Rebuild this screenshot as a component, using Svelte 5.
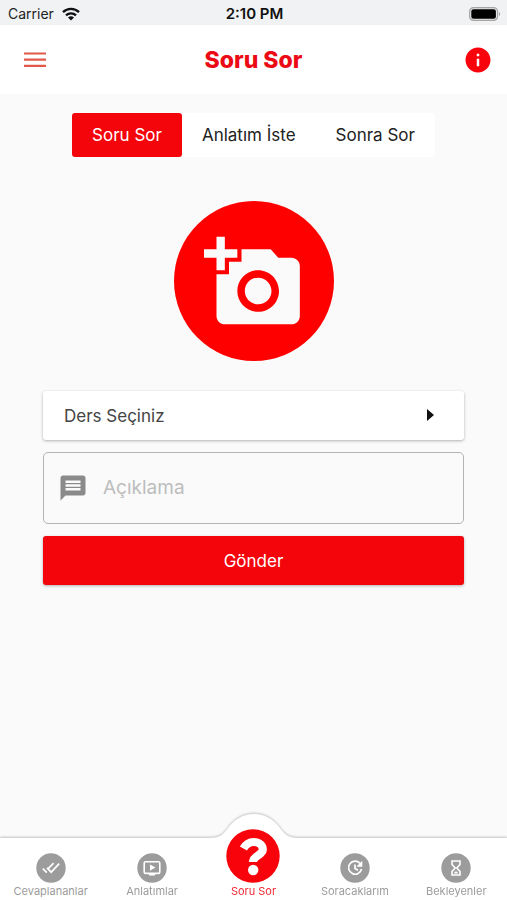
<script>
  let active = "Soru Sor";
  let lesson = "";
  let description = "";

  const tabs = ["Soru Sor", "Anlatım İste", "Sonra Sor"];
  const lessons = ["Matematik", "Fizik", "Kimya", "Biyoloji"];
</script>

<div class="page">
  <div class="status">
    <span class="carrier">
      Carrier
      <svg class="wifi" viewBox="0 0 18 14" aria-hidden="true">
        <g fill="none" stroke="#111" stroke-width="2.3">
          <path d="M1 5.1a11.4 11.4 0 0 1 16 0" />
          <path d="M4 8.4a7.1 7.1 0 0 1 10 0" />
        </g>
        <path d="M6 10.6a4.3 4.3 0 0 1 6 0L9 13.6z" fill="#111" />
      </svg>
    </span>
    <span class="time">2:10 PM</span>
    <svg class="battery" viewBox="0 0 32 14" aria-hidden="true">
      <rect x="0.6" y="0.6" width="28" height="12.8" rx="4" fill="#e6e6e6" stroke="#a5a5a5" stroke-width="1.2" />
      <rect x="2.3" y="2.3" width="24.6" height="9.4" rx="2.2" fill="#000" />
      <path d="M30 5c1.6.6 1.6 3.4 0 4z" fill="#a5a5a5" />
    </svg>
  </div>

  <header>
    <button class="icon-button" aria-label="Menü">
      <svg width="24" height="24" viewBox="0 0 24 24">
        <path d="M1 5.5h22M1 11.7h22M1 17.9h22" stroke="#e2594a" stroke-width="2.2" />
      </svg>
    </button>
    <h1>Soru Sor</h1>
    <button class="icon-button info" aria-label="Bilgi">
      <svg width="30" height="30" viewBox="0 0 24 24" fill="#f8030b">
        <path d="M12 2C6.48 2 2 6.48 2 12s4.48 10 10 10 10-4.48 10-10S17.52 2 12 2zm1 15h-2v-6h2v6zm0-8h-2V7h2v2z" />
      </svg>
    </button>
  </header>

  <main>
    <div class="tabs">
      {#each tabs as tab}
        <button class="tab" class:active={active == tab} on:click={() => (active = tab)}>{tab}</button>
      {/each}
    </div>

    <button class="photo" aria-label="Fotoğraf ekle">
      <svg width="100" height="100" viewBox="0 -0.4 24 24" fill="#fafafa">
        <path d="M3 4V1h2v3h3v2H5v3H3V6H0V4h3zm3 6V7h3V4h7l1.83 2H21c1.1 0 2 .9 2 2v12c0 1.1-.9 2-2 2H5c-1.1 0-2-.9-2-2V10h3zm7 9c2.76 0 5-2.24 5-5s-2.24-5-5-5-5 2.24-5 5 2.24 5 5 5zm-3.2-5c0 1.77 1.43 3.2 3.2 3.2s3.2-1.43 3.2-3.2-1.43-3.2-3.2-3.2-3.2 1.43-3.2 3.2z" />
      </svg>
    </button>

    <form on:submit|preventDefault>
      <div class="select">
        <select bind:value={lesson} aria-label="Ders">
          <option value="">Ders Seçiniz</option>
          {#each lessons as item}
            <option value={item}>{item}</option>
          {/each}
        </select>
        <svg class="arrow" viewBox="0 0 7 12" aria-hidden="true"><path d="M0 0l7 6-7 6z" fill="#111" /></svg>
      </div>

      <label class="description">
        <svg width="30" height="30" viewBox="0 0 24 24" fill="#8a8a8a" aria-hidden="true">
          <path d="M20 2H4c-1.1 0-1.99.9-1.99 2L2 22l4-4h14c1.1 0 2-.9 2-2V4c0-1.1-.9-2-2-2zm-2 12H6v-2h12v2zm0-3H6V9h12v2zm0-3H6V6h12v2z" />
        </svg>
        <textarea rows="1" placeholder="Açıklama" aria-label="Açıklama" bind:value={description}></textarea>
      </label>

      <button class="send">Gönder</button>
    </form>
  </main>

  <nav>
    <svg class="hump" viewBox="0 0 90 27" aria-hidden="true">
      <path d="M0 26C10 26 14 23 19 16C26 7 34 2 45 2S64 7 71 16C76 23 80 26 90 26V27H0z" fill="#fff" />
    </svg>
    <a href="#cevaplananlar">
      <svg class="badge" viewBox="0 0 30 30">
        <circle cx="15" cy="15" r="14.7" fill="#9c9c9c" />
        <path d="M6.8 15.6l4 4M11 14.8l4.2 4.4 8-8.6M12 15.8l5.6-5.6" fill="none" stroke="#fff" stroke-width="1.7" />
      </svg>
      Cevaplananlar
    </a>
    <a href="#anlatimlar">
      <svg class="badge" viewBox="0 0 30 30">
        <circle cx="15" cy="15" r="14.7" fill="#9c9c9c" />
        <rect x="7.2" y="8.8" width="15.6" height="11.6" rx="1.4" fill="none" stroke="#fff" stroke-width="1.6" />
        <path d="M12 20.8h6v1.6h-6zM13 11.4l5.4 3.2-5.4 3.2z" fill="#fff" />
      </svg>
      Anlatımlar
    </a>
    <a href="#soru-sor" class="current">
      <svg class="badge big" viewBox="0 0 54 54">
        <circle cx="27" cy="27" r="26.7" fill="#f8030b" />
        <path d="M17.4 19.6C20 15 23.4 13 27.6 13C33 13 36.8 16 36.8 20.6C36.8 26.4 27 26.4 27 33" fill="none" stroke="#fff" stroke-width="8.2" />
        <circle cx="27.2" cy="41" r="5.2" fill="#fff" />
      </svg>
      Soru Sor
    </a>
    <a href="#soracaklarim">
      <svg class="badge" viewBox="0 0 30 30">
        <circle cx="15" cy="15" r="14.7" fill="#9c9c9c" />
        <path d="M20 10.4A6.5 6.5 0 1 0 21.5 16M15 11.4v4l3 1.8" fill="none" stroke="#fff" stroke-width="1.7" />
        <path d="M22.3 7.8v6h-6z" fill="#fff" />
      </svg>
      Soracaklarım
    </a>
    <a href="#bekleyenler">
      <svg class="badge" viewBox="0 0 30 30">
        <circle cx="15" cy="15" r="14.7" fill="#9c9c9c" />
        <path d="M11 8h8v3.5L15.8 15l3.2 3.5V22h-8v-3.5l3.2-3.500L11 11.5z" fill="none" stroke="#fff" stroke-width="1.6" />
        <path d="M12.5 20.5l2.5-2.5 2.5 2.5z" fill="#fff" />
      </svg>
      Bekleyenler
    </a>
  </nav>
</div>

<style>
:global(body) {
    margin: 0;
    background-color: #fafafa;
}

.page {
    min-height: 100vh;
    display: flex;
    flex-direction: column;
    font-family: Inter, "Noto Sans", sans-serif;
    color: #222;
}

button, select, textarea {
    font: inherit;
    color: inherit;
    border: none;
    margin: 0;
    padding: 0;
    background: none;
}

button {
    cursor: pointer;
}

svg {
    display: block;
}

.status {
    display: grid;
    grid-template-columns: 1fr auto 1fr;
    align-items: center;
    height: 25px;
    padding: 2px 6px 0 8px;
    box-sizing: border-box;
    background: #f1f2f4;
    font-size: 14px;
    line-height: 20px;
}

.carrier {
    display: flex;
    align-items: center;
    gap: 8px;
}

.wifi {
    width: 18px;
    height: 14px;
}

.time {
    font-size: 15px;
    font-weight: 600;
    color: #111;
}

.battery {
    width: 32px;
    height: 14px;
    justify-self: end;
}

header {
    display: flex;
    align-items: center;
    justify-content: space-between;
    height: 69px;
    padding: 0 14px;
    background: #fff;
}

.icon-button {
    width: 42px;
    height: 42px;
    display: grid;
    place-items: center;
}

.icon-button.info {
    justify-items: end;
}

h1 {
    margin: 0;
    font-size: 23px;
    line-height: 30px;
    font-weight: 800;
    color: #ec0b14;
}

main {
    flex: 1;
    display: flex;
    flex-direction: column;
    align-items: center;
    padding: 19px 43px;
}

.tabs {
    display: flex;
    background: #fff;
    border-radius: 3px;
}

.tab {
    height: 44px;
    padding: 0 20px;
    font-size: 17px;
    border-radius: 3px;
}

.tab.active {
    background: #f4040b;
    color: #fff;
}

.photo {
    display: grid;
    place-items: center;
    width: 160px;
    height: 160px;
    margin: 44px 0 30px;
    border-radius: 50%;
    background: #fe0000;
}

form {
    align-self: stretch;
    display: flex;
    flex-direction: column;
    gap: 12px;
}

.select {
    position: relative;
    background: #fff;
    border-radius: 3px;
    box-shadow: 0 1px 3px rgba(0, 0, 0, 0.3);
}

select {
    display: block;
    width: 100%;
    height: 49px;
    padding: 0 50px 0 21px;
    appearance: none;
    font-size: 17px;
    color: #444;
}

.arrow {
    position: absolute;
    right: 30px;
    top: 18px;
    width: 7px;
    height: 12px;
    pointer-events: none;
}

.description {
    display: flex;
    align-items: center;
    gap: 15px;
    height: 72px;
    padding: 0 14px;
    box-sizing: border-box;
    border: 1px solid #b4b4b4;
    border-radius: 5px;
}

textarea {
    flex: 1;
    height: 28px;
    font-size: 19px;
    line-height: 28px;
    resize: none;
    outline: none;
}

textarea::placeholder {
    color: #bdbdbd;
}

.send {
    height: 49px;
    font-size: 17px;
    color: #fff;
    background: #f4040b;
    border-radius: 3px;
    box-shadow: 0 1px 3px rgba(0, 0, 0, 0.3);
}

nav {
    position: relative;
    display: grid;
    grid-template-columns: repeat(5, 1fr);
    grid-template-rows: 100%;
    align-items: end;
    height: 62px;
    background: #fff;
    filter: drop-shadow(0 -1px 1px rgba(0, 0, 0, 0.22));
}

.hump {
    position: absolute;
    left: 50%;
    bottom: 100%;
    width: 90px;
    height: 27px;
    margin: 0 0 -1px -45px;
}

nav a {
    position: relative;
    display: flex;
    flex-direction: column;
    align-items: center;
    gap: 1px;
    padding-bottom: 2px;
    font-size: 11px;
    line-height: 14px;
    color: #9c9c9c;
    text-decoration: none;
}

nav a.current {
    color: #f02a33;
}

.badge {
    flex: none;
    width: 30px;
    height: 30px;
}

.badge.big {
    width: 54px;
    height: 54px;
}
</style>
